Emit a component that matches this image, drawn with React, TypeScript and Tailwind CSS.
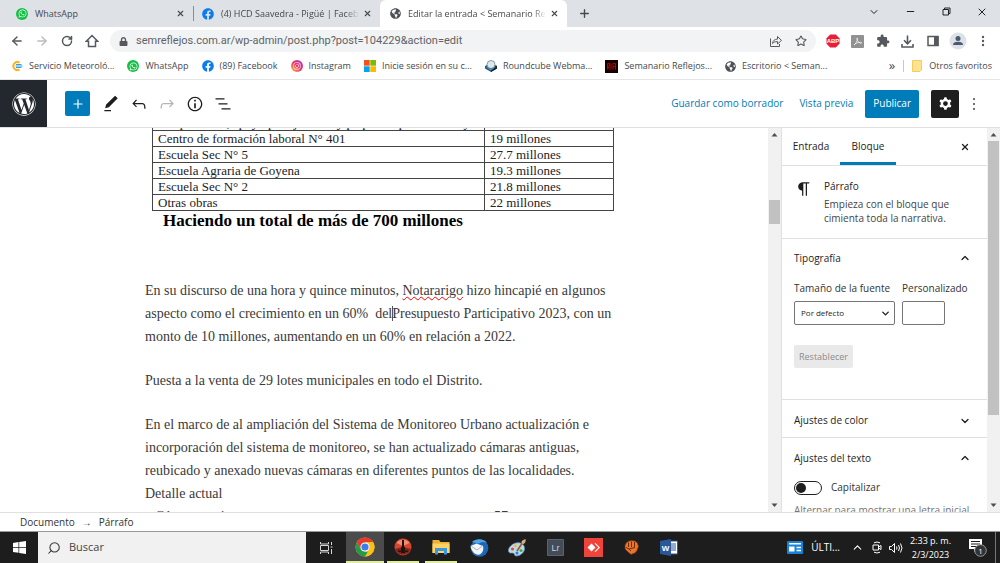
import type { ReactNode } from "react";
import {
  FaFacebook,
  FaGlobeAmericas,
  FaInstagram,
  FaLock,
  FaWhatsapp,
  FaWordpress,
} from "react-icons/fa";
import { MdExtension } from "react-icons/md";
import {
  ArrowLeft,
  ArrowRight,
  ChevronDown,
  ChevronUp,
  Minus,
  Plus,
  RotateCw,
  Search,
  Star,
  X,
} from "lucide-react";

const WhatsAppIcon = () => (
  <span className="flex h-3 w-3 shrink-0 items-center justify-center rounded-full bg-[#12c143] text-white">
    <FaWhatsapp size={9} />
  </span>
);

const FacebookIcon = () => <FaFacebook size={12} className="shrink-0 text-[#0a7cf0]" />;

const GlobeIcon = () => <FaGlobeAmericas size={11} className="shrink-0 text-[#4d5156]" />;

const ServicioIcon = () => (
  <svg width="12" height="12" viewBox="0 0 12 12" className="shrink-0">
    <path d="M8.500 2.600A4 4 0 1 0 8.500 9.400" fill="none" stroke="#fbb321" strokeWidth="2" />
    <path d="M5 4.500h5.500M4.500 6h7M5 7.500h5.500" stroke="#3d9be0" strokeWidth="1.200" />
  </svg>
);

const InstagramIcon = () => (
  <span className="flex h-3 w-3 shrink-0 items-center justify-center rounded-full bg-linear-to-tr from-[#fdb52b] via-[#f0255c] to-[#a020d8] text-white">
    <FaInstagram size={8} />
  </span>
);

const MicrosoftIcon = () => (
  <svg width="12" height="12" viewBox="0 0 12 12" className="shrink-0">
    <path fill="#f25022" d="M0 0h5.700v5.700H0z" />
    <path fill="#7fba00" d="M6.300 0H12v5.700H6.300z" />
    <path fill="#00a4ef" d="M0 6.300h5.700V12H0z" />
    <path fill="#ffb900" d="M6.300 6.300H12V12H6.300z" />
  </svg>
);

const RoundcubeIcon = () => (
  <svg width="12" height="12" viewBox="0 0 12 12" className="shrink-0">
    <path d="M0 6l6-3 6 3v2.500L6 12 0 8.500z" fill="#2b5f86" />
    <path d="M6 8.500l6-3v3L6 12z" fill="#16202a" />
    <circle cx="6" cy="4.500" r="4" fill="#dfe7ec" stroke="#66747e" strokeWidth=".7" />
    <path d="M0 6l6 3 6-3-6 4.500z" fill="#4d94c4" />
  </svg>
);

const SemanarioIcon = () => (
  <svg width="13" height="13" viewBox="0 0 13 13" className="shrink-0">
    <path d="M0 0h13v13H0z" fill="#150000" />
    <path d="M2.500 9.500v-6h2v2.500h-2l2 3.500M6 3.500v6M8 9.500v-6h2.500v6M8 6.500h2.500" stroke="#b80000" fill="none" />
  </svg>
);

const bookmarks = [
  { icon: <ServicioIcon />, text: "Servicio Meteoroló..." },
  { icon: <WhatsAppIcon />, text: "WhatsApp" },
  { icon: <FacebookIcon />, text: "(89) Facebook" },
  { icon: <InstagramIcon />, text: "Instagram" },
  { icon: <MicrosoftIcon />, text: "Inicie sesión en su c..." },
  { icon: <RoundcubeIcon />, text: "Roundcube Webma..." },
  { icon: <SemanarioIcon />, text: "Semanario Reflejos..." },
  { icon: <GlobeIcon />, text: "Escritorio < Seman..." },
];

const rows = [
  ["Cooperativas, apoyo para jóvenes y pequeños productores y", ""],
  ["Centro de formación laboral N° 401", "19 millones"],
  ["Escuela Sec N° 5", "27.7 millones"],
  ["Escuela Agraria de Goyena", "19.3 millones"],
  ["Escuela Sec N° 2", "21.8 millones"],
  ["Otras obras", "22 millones"],
];

function IconButton({ label, className = "", children }: { label: string; className?: string; children: ReactNode }) {
  return (
    <button aria-label={label} className={"flex shrink-0 items-center justify-center " + className}>
      {children}
    </button>
  );
}

function TabBar() {
  return (
    <div className="flex h-[27px] shrink-0 bg-[#dee1e6] text-[9px] text-[#45494d]">
      <div className="flex w-[193px] items-center pr-2 pl-4">
        <WhatsAppIcon />
        <span className="ml-[7px] flex-1">WhatsApp</span>
        <IconButton label="Cerrar WhatsApp">
          <X size={9} strokeWidth={3} />
        </IconButton>
      </div>
      <div className="my-[6px] w-px bg-[#8a8d91]" />
      <div className="flex w-[186px] items-center pr-2 pl-2">
        <FacebookIcon />
        <span className="ml-[7px] flex-1 overflow-hidden mask-r-from-90% whitespace-nowrap">
          (4) HCD Saavedra - Pigüé | Facebook
        </span>
        <IconButton label="Cerrar Facebook" className="ml-1">
          <X size={9} strokeWidth={3} />
        </IconButton>
      </div>
      <div className="flex w-[187px] items-center rounded-t-md bg-white pr-2 pl-[10px]">
        <GlobeIcon />
        <span className="ml-[7px] flex-1 overflow-hidden mask-r-from-90% whitespace-nowrap">
          Editar la entrada &lt; Semanario Reflejos
        </span>
        <IconButton label="Cerrar entrada" className="ml-1">
          <X size={9} strokeWidth={3} />
        </IconButton>
      </div>
      <IconButton label="Nueva pestaña" className="w-[34px]">
        <Plus size={13} strokeWidth={2.5} />
      </IconButton>
      <div className="ml-auto flex pb-1 text-[#222]">
        <IconButton label="Buscar pestañas" className="w-9">
          <ChevronDown size={12} strokeWidth={2} />
        </IconButton>
        <IconButton label="Minimizar" className="w-9">
          <Minus size={11} strokeWidth={2.5} />
        </IconButton>
        <IconButton label="Restaurar" className="w-9">
          <svg width="9" height="9" viewBox="0 0 9 9" fill="none" stroke="currentColor">
            <path d="M1 2.500h5.500V8H1zM2.500 2.500V1H8v5.500H6.500" />
          </svg>
        </IconButton>
        <IconButton label="Cerrar" className="w-9">
          <X size={12} strokeWidth={2} />
        </IconButton>
      </div>
    </div>
  );
}

function AddressBar() {
  return (
    <div className="flex h-7 shrink-0 items-center bg-white pr-[5px] pl-1 text-[#55595e]">
      <IconButton label="Atrás" className="w-[25px]">
        <ArrowLeft size={14} strokeWidth={2.5} />
      </IconButton>
      <IconButton label="Adelante" className="w-[25px] text-[#b9bcc0]">
        <ArrowRight size={14} strokeWidth={2.5} />
      </IconButton>
      <IconButton label="Recargar" className="w-[25px]">
        <RotateCw size={12} strokeWidth={3} />
      </IconButton>
      <IconButton label="Inicio" className="w-[25px]">
        <svg width="14" height="14" viewBox="0 0 14 14" fill="none" stroke="currentColor" strokeWidth="1.500">
          <path d="M1.300 7.200L7 1.500l5.700 5.700H10.500v5.300h-7V7.200z" />
        </svg>
      </IconButton>
      <div className="ml-[6px] flex h-[22px] flex-1 items-center rounded-full bg-[#f1f3f4] pr-[3px] pl-[9px]">
        <FaLock size={9} />
        <input
          aria-label="Dirección"
          defaultValue="semreflejos.com.ar/wp-admin/post.php?post=104229&action=edit"
          className="ml-2 min-w-0 flex-1 bg-transparent font-[Roboto,sans-serif] text-[11px] text-[#5f6368] outline-none"
        />
        <IconButton label="Compartir" className="w-[25px]">
          <svg width="12" height="12" viewBox="0 0 12 12" fill="none" stroke="currentColor">
            <path d="M.500 3.500v8h9V9" />
            <path d="M2.500 8.500c.4-3 2.200-4.300 5-4.400V1.500l4 3.900-4 3.600V6.600c-2.200 0-3.800.5-5 1.900z" />
          </svg>
        </IconButton>
        <IconButton label="Marcador" className="w-[25px]">
          <Star size={12} strokeWidth={2.2} />
        </IconButton>
      </div>
      <IconButton label="Adblock Plus" className="ml-1 w-[25px]">
        <svg width="14" height="14" viewBox="0 0 14 14">
          <path d="M4.200.500h5.600l3.700 3.700v5.600l-3.700 3.700H4.200L.500 9.800V4.200z" fill="#ec1c3c" />
          <text x="7" y="9" textAnchor="middle" fontSize="6" fontWeight="700" fill="#fff" fontFamily="Liberation Sans">
            ABP
          </text>
        </svg>
      </IconButton>
      <IconButton label="Acrobat" className="w-[25px]">
        <svg width="13" height="13" viewBox="0 0 13 13">
          <rect width="13" height="13" rx="1" fill="#919191" />
          <path
            d="M3 10c1.500-.8 3.500-4 3.500-6.500 0-1-.9-.7-.7.2C6.200 6 8 8 10 8.300c1 0 .8-1-.5-1C7 7.200 4 8.500 3 10z"
            fill="none"
            stroke="#f2f2f2"
            strokeWidth=".8"
          />
        </svg>
      </IconButton>
      <IconButton label="Extensiones" className="w-[25px]">
        <MdExtension size={14} />
      </IconButton>
      <IconButton label="Descargas" className="w-[25px]">
        <svg width="13" height="13" viewBox="0 0 13 13" fill="none" stroke="currentColor" strokeWidth="1.600">
          <path d="M6.500.500v8M3 5.300l3.500 3.500L10 5.300M1 9v3h11V9" />
        </svg>
      </IconButton>
      <IconButton label="Panel lateral" className="w-[25px]">
        <svg width="12" height="12" viewBox="0 0 12 12">
          <path d="M1 1.500h10v9H1z" fill="none" stroke="currentColor" strokeWidth="1.500" />
          <path d="M7 1h4.500v10H7z" fill="currentColor" />
        </svg>
      </IconButton>
      <IconButton label="Perfil" className="w-[25px]">
        <svg width="18" height="18" viewBox="0 0 18 18">
          <circle cx="9" cy="9" r="8.500" fill="#dee1e6" />
          <circle cx="9" cy="6.500" r="2.500" fill="#4a5a70" />
          <path d="M4 13c0-2.200 2-3.200 5-3.200s5 1 5 3.200z" fill="#4a5a70" />
        </svg>
      </IconButton>
      <IconButton label="Menú" className="w-[25px]">
        <svg width="4" height="12" viewBox="0 0 4 12" fill="currentColor">
          <circle cx="2" cy="2" r="1.200" />
          <circle cx="2" cy="6" r="1.200" />
          <circle cx="2" cy="10" r="1.200" />
        </svg>
      </IconButton>
    </div>
  );
}

function BookmarksBar() {
  return (
    <div className="flex h-[25px] shrink-0 items-center border-b border-[#e4e5e7] bg-white pr-2 pb-[2px] pl-[11px] text-[9px] whitespace-nowrap text-[#45494d]">
      <nav className="flex gap-[13px]">
        {bookmarks.map((bookmark) => (
          <a key={bookmark.text} href="#" className="flex items-center gap-[6px]">
            {bookmark.icon}
            {bookmark.text}
          </a>
        ))}
      </nav>
      <button className="ml-auto pb-[2px] text-[13px] leading-3">»</button>
      <div className="mx-2 h-3 w-px bg-[#c6c8cb]" />
      <a href="#" className="flex items-center gap-[7px]">
        <svg width="10" height="12" viewBox="0 0 10 12">
          <path d="M.500.500h9v9.500l-1.500 1.500H.500z" fill="#ffe38c" stroke="#f3cd63" />
        </svg>
        Otros favoritos
      </a>
    </div>
  );
}

function EditorHeader() {
  return (
    <header className="flex h-12 shrink-0 items-center border-b border-[#e0e0e0] bg-white text-[10px] text-[#007cba]">
      <a href="#" aria-label="WordPress" className="flex h-full w-[47px] items-center justify-center bg-[#23282e] text-white">
        <FaWordpress size={24} />
      </a>
      <IconButton label="Añadir bloque" className="ml-[18px] h-[25px] w-[25px] rounded-xs bg-[#007cba] text-white">
        <Plus size={14} strokeWidth={2} />
      </IconButton>
      <div className="ml-[7px] flex text-[#1e1e1e]">
        <IconButton label="Herramientas" className="w-7">
          <svg width="20" height="20" viewBox="0 0 24 24" fill="currentColor">
            <path d="M20.100 5.100L16.900 2 6.200 12.700l-1.300 4.400 4.500-1.300L20.100 5.100zM4 20.800h8v-1.500H4v1.500z" />
          </svg>
        </IconButton>
        <IconButton label="Deshacer" className="w-7">
          <svg width="20" height="20" viewBox="0 0 24 24" fill="currentColor">
            <path d="M18.300 11.700c-.6-.6-1.400-.9-2.300-.9H6.700l2.900-3.300-1.100-1-4.500 5L8.500 16l1-1-2.700-2.700H16c.5 0 .9.2 1.300.5 1 1 1 3.400 1 4.500v.3h1.500v-.2c0-1.500 0-4.300-1.500-5.700z" />
          </svg>
        </IconButton>
        <IconButton label="Rehacer" className="w-7 text-[#b5b5b5]">
          <svg width="20" height="20" viewBox="0 0 24 24" fill="currentColor">
            <path d="M15.600 6.500l-1.100 1 2.900 3.300H8c-.9 0-1.700.3-2.300.9-1.400 1.500-1.400 4.200-1.400 5.600v.2h1.500v-.3c0-1.100 0-3.500 1-4.500.3-.3.700-.5 1.300-.5h9.200L14.500 15l1.100 1.100 4.600-4.600-4.600-5z" />
          </svg>
        </IconButton>
        <IconButton label="Detalles" className="w-7">
          <svg width="20" height="20" viewBox="0 0 24 24" fill="currentColor">
            <path d="M12 3.200c-4.800 0-8.800 3.900-8.800 8.800 0 4.800 3.900 8.800 8.800 8.800 4.800 0 8.800-3.900 8.800-8.800 0-4.800-4-8.800-8.800-8.800zm0 16c-4 0-7.200-3.300-7.200-7.200C4.800 8 8 4.800 12 4.800s7.200 3.300 7.200 7.200c0 4-3.200 7.200-7.200 7.200zM11 17h2v-6h-2v6zm0-8h2V7h-2v2z" />
          </svg>
        </IconButton>
        <IconButton label="Vista de lista" className="w-7">
          <svg width="20" height="20" viewBox="0 0 24 24" fill="currentColor">
            <path d="M13.800 5.200H3v1.500h10.800V5.200zm-3.600 12v1.500H21v-1.500H10.200zm7.200-6H6.600v1.500h10.800v-1.500z" />
          </svg>
        </IconButton>
      </div>
      <button className="ml-auto">Guardar como borrador</button>
      <button className="ml-4">Vista previa</button>
      <button className="ml-3 h-7 rounded-xs bg-[#007cba] px-2 text-white">Publicar</button>
      <IconButton label="Ajustes" className="ml-3 h-7 w-7 rounded-xs bg-[#1e1e1e] text-white">
        <svg width="19" height="19" viewBox="0 0 24 24" fill="currentColor">
          <path
            fillRule="evenodd"
            d="M10.289 4.836A1 1 0 0111.275 4h1.306a1 1 0 01.987.836l.244 1.466c.787.26 1.503.679 2.108 1.218l1.393-.522a1 1 0 011.216.437l.653 1.130a1 1 0 01-.23 1.273l-1.148.944a6.025 6.025 0 010 2.435l1.149.946a1 1 0 01.23 1.272l-.653 1.130a1 1 0 01-1.216.437l-1.394-.522c-.605.540-1.320.958-2.108 1.218l-.244 1.466a1 1 0 01-.987.836h-1.306a1 1 0 01-.986-.836l-.244-1.466a5.995 5.995 0 01-2.108-1.218l-1.394.522a1 1 0 01-1.217-.436l-.653-1.131a1 1 0 01.23-1.272l1.149-.946a6.026 6.026 0 010-2.435l-1.148-.944a1 1 0 01-.23-1.272l.653-1.131a1 1 0 011.217-.437l1.393.522a5.994 5.994 0 012.108-1.218l.244-1.466zM14.929 12a3 3 0 11-6 0 3 3 0 016 0z"
          />
        </svg>
      </IconButton>
      <IconButton label="Opciones" className="mr-3 w-[29px] text-[#1e1e1e]">
        <svg width="20" height="20" viewBox="0 0 24 24" fill="currentColor">
          <path d="M13 19h-2v-2h2v2zm0-6h-2v-2h2v2zm0-6h-2V5h2v2z" />
        </svg>
      </IconButton>
    </header>
  );
}

function Scrollbar({ gap, thumb }: { gap: string; thumb: string }) {
  return (
    <div className="flex w-[13px] shrink-0 flex-col items-center bg-[#f1f1f1] text-[#505050]">
      <svg width="13" height="13" viewBox="0 0 13 13" fill="currentColor">
        <path d="M3.500 8.500h6l-3-3.500z" />
      </svg>
      <div className={gap} />
      <div className={"w-[11px] bg-[#c1c1c1] " + thumb} />
      <svg width="13" height="13" viewBox="0 0 13 13" fill="currentColor" className="mt-auto">
        <path d="M3.500 4.500h6l-3 3.500z" />
      </svg>
    </div>
  );
}

function Content() {
  return (
    <main className="flex-1 overflow-hidden bg-white">
      <div className="mx-auto w-full max-w-[478px] font-['Liberation_Serif',serif] text-sm leading-[23px] text-[#3a3a3a]">
        <table className="-mt-[14px] ml-[7px] w-[462px] border-collapse text-[13px] leading-[15px] text-[#222]">
          <tbody>
            {rows.map(([name, amount]) => (
              <tr key={name}>
                <td className="h-4 w-[332px] border border-[#444] px-[5px] whitespace-nowrap">{name}</td>
                <td className="h-4 border border-[#444] px-[5px] whitespace-nowrap">{amount}</td>
              </tr>
            ))}
          </tbody>
        </table>
        <h3 className="ml-[18px] text-[17px] leading-5 font-bold text-black">
          Haciendo un total de más de 700 millones
        </h3>
        <p className="mt-12">
          En su discurso de una hora y quince minutos,{" "}
          <span className="underline decoration-[#f00] decoration-wavy decoration-1">Notararigo</span> hizo hincapié en
          algunos
          <br />
          aspecto como el crecimiento en un 60%&nbsp; del
          <span className="-mr-px border-l border-[#555]" />
          Presupuesto Participativo 2023, con un
          <br />
          monto de 10 millones, aumentando en un 60% en relación a 2022.
        </p>
        <p className="mt-[21px]">Puesta a la venta de 29 lotes municipales en todo el Distrito.</p>
        <p className="mt-[21px]">
          En el marco de al ampliación del Sistema de Monitoreo Urbano actualización e
          <br />
          incorporación del sistema de monitoreo, se han actualizado cámaras antiguas,
          <br />
          reubicado y anexado nuevas cámaras en diferentes puntos de las localidades.
          <br />
          Detalle actual
        </p>
        <div className="flex pl-[10px]">
          <span className="w-[339px]">Cámaras existentes</span>
          <span>57</span>
        </div>
      </div>
    </main>
  );
}

function Sidebar() {
  return (
    <aside className="flex min-w-0 flex-1 flex-col overflow-hidden bg-white text-[10px] text-[#1e1e1e]">
      <div className="flex h-[38px] shrink-0 items-center border-b border-[#e0e0e0] pr-[17px] font-medium">
        <button className="w-[58px]">Entrada</button>
        <button className="h-full w-14 border-b-3 border-[#007cba] pt-[3px]">Bloque</button>
        <IconButton label="Cerrar ajustes" className="ml-auto">
          <X size={10} strokeWidth={3} />
        </IconButton>
      </div>
      <section className="flex h-[73px] shrink-0 border-b border-[#e0e0e0] pt-[13px] pl-3 leading-[14px]">
        <svg width="20" height="20" viewBox="0 0 24 24" fill="currentColor" className="mr-[10px]">
          <path d="M18.300 4H9.900v-.1l-.9.200c-2.300.4-4 2.400-4 4.800s1.700 4.400 4 4.800l.7.100V20h1.500V5.500h2.900V20h1.500V5.500h2.700V4z" />
        </svg>
        <div>
          <h2 className="pb-1 font-medium">Párrafo</h2>
          <p className="text-[#444]">
            Empieza con el bloque que
            <br />
            cimienta toda la narrativa.
          </p>
        </div>
      </section>
      <section className="h-[161px] shrink-0 border-b border-[#e0e0e0] pr-4 pl-3">
        <button className="flex h-[38px] w-full items-center justify-between font-medium">
          Tipografía
          <ChevronUp size={12} strokeWidth={2.5} />
        </button>
        <div className="flex gap-[7px] pt-1">
          <div className="w-[101px]">
            <label htmlFor="size" className="block leading-[15px] whitespace-nowrap text-[#333]">
              Tamaño de la fuente
            </label>
            <div className="relative mt-[5px]">
              <select
                id="size"
                className="h-6 w-full appearance-none rounded-xs border border-[#757575] bg-white pl-[6px] text-[8px]"
              >
                <option>Por defecto</option>
              </select>
              <ChevronDown size={11} strokeWidth={3} className="pointer-events-none absolute top-[7px] right-1" />
            </div>
          </div>
          <div>
            <label htmlFor="custom" className="block leading-[15px] text-[#333]">
              Personalizado
            </label>
            <input id="custom" className="mt-[5px] h-6 w-[43px] rounded-xs border border-[#757575] px-1" />
          </div>
        </div>
        <button disabled className="mt-5 h-[23px] rounded-xs bg-[#e9e9e9] px-[5px] text-[9px] text-[#8c8c8c]">
          Restablecer
        </button>
      </section>
      <section className="shrink-0 border-b border-[#e0e0e0] pr-4 pl-3">
        <button className="flex h-[37px] w-full items-center justify-between pt-1 font-medium">
          Ajustes de color
          <ChevronDown size={12} strokeWidth={2.5} />
        </button>
      </section>
      <section className="pr-4 pl-3">
        <button className="flex h-10 w-full items-center justify-between font-medium">
          Ajustes del texto
          <ChevronUp size={12} strokeWidth={2.5} />
        </button>
        <label className="mt-[2px] flex items-center gap-[9px] text-[#333]">
          <input
            type="checkbox"
            className="h-[14px] w-7 appearance-none rounded-full border border-[#1e1e1e] bg-white before:m-px before:block before:h-[10px] before:w-[10px] before:rounded-full before:bg-[#1e1e1e]"
          />
          Capitalizar
        </label>
        <p className="mt-2 whitespace-nowrap text-[#757575]">Alternar para mostrar una letra inicial</p>
      </section>
    </aside>
  );
}

const ChromeIcon = () => (
  <svg width="20" height="20" viewBox="0 0 20 20">
    <circle cx="10" cy="10" r="9.500" fill="#fbc116" />
    <path d="M1.770 5.250A9.500 9.500 0 0 1 18.230 5.250H10L5.890 12.380z" fill="#e33b2e" />
    <path d="M1.770 5.250L5.890 12.380 10 14.750h4.100L10 19.500A9.500 9.500 0 0 1 1.770 5.250z" fill="#269a4b" />
    <path d="M14.110 12.380L10 19.500a9.500 9.500 0 0 0 8.230-14.250H10z" fill="#fbc116" />
    <circle cx="10" cy="10" r="4.600" fill="#fff" />
    <circle cx="10" cy="10" r="3.600" fill="#3b7ded" />
  </svg>
);

const taskbarApps = [
  {
    name: "Google Chrome",
    className: "w-[38px] border-b-2 border-[#e0ee9c] bg-[#4b4b4b]",
    icon: <ChromeIcon />,
  },
  {
    name: "Nitro",
    className: "mx-[3px] w-8 border-b-2 border-[#e0ee9c]",
    icon: (
      <svg width="18" height="18" viewBox="0 0 18 18">
        <circle cx="9" cy="9" r="8.500" fill="#d8452e" />
        <path d="M1 11a8.500 8.500 0 0 0 16 0L9 9z" fill="#7d2318" />
        <path d="M2.500 5a8 8 0 0 1 13 0L9 8z" fill="#f28a6c" />
        <path d="M8 2h2v6l1 1.500V15H7V9.500L8 8z" fill="#1b1311" />
        <path d="M4 12.500h10V14H4z" fill="#2a1512" />
      </svg>
    ),
  },
  {
    name: "Explorador de archivos",
    className: "mx-[3px] w-8 border-b-2 border-[#e0ee9c]",
    icon: (
      <svg width="18" height="16" viewBox="0 0 18 16">
        <path d="M.500 1h6.500l1.500 2h9v11H.500z" fill="#eeb02f" />
        <path d="M.500 4.500h17V14H.500z" fill="#fcd364" />
        <path d="M3 15.500V9h12v6.500h-3V12H6v3.500z" fill="#3b97dd" />
      </svg>
    ),
  },
  {
    name: "Thunderbird",
    className: "w-[38px]",
    icon: (
      <svg width="20" height="20" viewBox="0 0 20 20">
        <circle cx="10.500" cy="10" r="8.800" fill="#1d67b8" />
        <path d="M3 4c4-4 12-3.500 15 1-3-1.500-6-1-8 .5z" fill="#4fa7e6" />
        <path d="M1.500 8l6-2.500L14 8c1 3.500-.5 7.500-3.500 8.500C6.500 17.500 2.500 14 1.500 8z" fill="#f2f4f6" />
        <path d="M2 8l6 4 5.500-4" fill="none" stroke="#a9b5c1" />
      </svg>
    ),
  },
  {
    name: "Paint",
    className: "w-[38px]",
    icon: (
      <svg width="20" height="20" viewBox="0 0 20 20">
        <path d="M9 5c5-1 8.500 1.500 8.500 5.500S13 18 9 18c-2 0-1-3-3-3s-4.500.500-4.500-2.500S5 5.800 9 5z" fill="#b9d9ee" stroke="#6f9fc1" strokeWidth=".7" />
        <circle cx="5.500" cy="11" r="1.500" fill="#e64632" />
        <circle cx="8.500" cy="7.800" r="1.400" fill="#f5b91e" />
        <circle cx="10" cy="15" r="1.500" fill="#2f7dd2" />
        <circle cx="14" cy="12.500" r="1.500" fill="#4aa83e" />
        <path d="M10 13l6-9" stroke="#9b5c28" strokeWidth="1.600" />
        <path d="M14.500 5c0-3 2-3 4-4 .5 2 0 4.500-2.500 5.200z" fill="#d4ae7c" />
      </svg>
    ),
  },
  {
    name: "Lightroom",
    className: "w-[38px]",
    icon: (
      <svg width="17" height="17" viewBox="0 0 17 17">
        <path d="M.500.500h16v16H.500z" fill="#434c57" stroke="#59626e" />
        <text x="8.500" y="12" textAnchor="middle" fontSize="9" fill="#c5d1dc" fontFamily="Liberation Sans">
          Lr
        </text>
      </svg>
    ),
  },
  {
    name: "AnyDesk",
    className: "w-[38px]",
    icon: (
      <svg width="19" height="19" viewBox="0 0 19 19">
        <path d="M0 0h19v19H0z" fill="#f0433a" />
        <path d="M7.500 5.500l4 4-4 4-4-4z" fill="#fff" />
        <path d="M10.500 5.500l1-.5 4.500 4.500-4.500 4.500-1-.5 4-4z" fill="#fff" />
      </svg>
    ),
  },
  {
    name: "Puño",
    className: "w-[38px]",
    icon: (
      <svg width="17" height="17" viewBox="0 0 17 17">
        <path d="M2 6l1.500-2.500L6 2l2.500-.5L12 2l2.500 2 1 3.500-1.500 4-2 2.500-4 1.500L5 13 2 10z" fill="#e8752b" stroke="#6d2d0c" strokeWidth=".7" />
        <path d="M5.500 3.500V8M8.500 2.500V8M11.500 3v5M3 8.500l3 1.500 6-1.500M6 10l2 2" stroke="#6d2d0c" fill="none" />
      </svg>
    ),
  },
  {
    name: "Word",
    className: "w-[38px]",
    icon: (
      <svg width="18" height="17" viewBox="0 0 18 17">
        <path d="M9 2h8.500v13H9z" fill="#fff" stroke="#2b579a" />
        <path d="M11 5h5M11 7h5M11 9h5M11 11h5" stroke="#2b579a" />
        <path d="M0 2l11-2v17L0 15z" fill="#2b579a" />
        <text x="5.500" y="11.500" textAnchor="middle" fontSize="8" fontWeight="700" fill="#fff" fontFamily="Liberation Sans">
          W
        </text>
      </svg>
    ),
  },
];

function Taskbar() {
  return (
    <div className="flex h-8 shrink-0 items-stretch border-t border-[#9a9a9a] bg-[#1d1d1d] text-white">
      <IconButton label="Inicio de Windows" className="w-[38px]">
        <svg width="13" height="13" viewBox="0 0 13 13" fill="currentColor">
          <path d="M0 1.900l5.500-.8v5H0zM6.200 1L13 0v6.100H6.200zM0 6.800h5.500v5L0 11zM6.200 6.800H13V13l-6.800-1z" />
        </svg>
      </IconButton>
      <label className="flex w-[268px] items-center gap-2 bg-[#f1f1f1] pl-[9px] text-[#333]">
        <Search size={14} strokeWidth={1.8} className="-scale-x-100" />
        <input
          placeholder="Buscar"
          className="min-w-0 flex-1 bg-transparent text-[11px] outline-none placeholder:text-[#444]"
        />
      </label>
      <IconButton label="Vista de tareas" className="w-10">
        <svg width="13" height="12" viewBox="0 0 13 12" fill="none" stroke="#d6d6d6">
          <path d="M.500 0v2h8V0M.500 12v-2h8v2M.500 3.500h8v5h-8zM11.500 0v3M11.500 7v5M10.500 5h2" />
        </svg>
      </IconButton>
      {taskbarApps.map((app) => (
        <IconButton key={app.name} label={app.name} className={app.className}>
          {app.icon}
        </IconButton>
      ))}
      <button className="ml-auto flex items-center gap-2 text-[10px]">
        <svg width="16" height="13" viewBox="0 0 16 13">
          <rect width="16" height="13" rx="1" fill="#1683d8" />
          <path d="M2 2.800h12M9.500 6.500H14M9.500 9.500H14" stroke="#fff" strokeWidth="1.500" />
          <path d="M2 5.500h5.500v5H2z" fill="#fff" />
        </svg>
        ÚLTI...
      </button>
      <IconButton label="Mostrar iconos ocultos" className="ml-2 w-[19px]">
        <ChevronUp size={13} strokeWidth={2} />
      </IconButton>
      <IconButton label="Reunirse ahora" className="w-[19px]">
        <svg width="10" height="13" viewBox="0 0 10 13" fill="none" stroke="currentColor">
          <path d="M1 4h5.500v5H1zM6.500 6l2.500-1.500v4L6.500 7M2 1.800q3-1.600 6 0M2 11.200q3 1.600 6 0" />
        </svg>
      </IconButton>
      <IconButton label="Volumen" className="w-[19px]">
        <svg width="14" height="12" viewBox="0 0 14 12" fill="none" stroke="currentColor">
          <path d="M.500 4.500h2L5.500 1.500v9L2.500 7.500h-2zM7.500 4.500q1 1.500 0 3M9.500 3q2 3 0 6M11.500 1.500q3 4.500 0 9" />
        </svg>
      </IconButton>
      <div className="flex w-[51px] flex-col justify-center text-center text-[9px] leading-[14px]">
        <span>2:33 p. m.</span>
        <span>2/3/2023</span>
      </div>
      <IconButton label="Notificaciones" className="mr-1 w-10 border-r border-[#777] pl-1">
        <svg width="19" height="19" viewBox="0 0 19 19">
          <path d="M1 1h13v10H9l-3 3v-3H1z" fill="#fff" />
          <path d="M3 3.500h9M3 6h9M3 8.500h6" stroke="#1d1d1d" />
          <circle cx="12.500" cy="12.500" r="5.800" fill="#333" stroke="#999" />
          <text x="12.500" y="15.500" textAnchor="middle" fontSize="8" fill="#fff" fontFamily="Open Sans">
            1
          </text>
        </svg>
      </IconButton>
    </div>
  );
}

export default function App() {
  return (
    <div className="flex h-screen flex-col overflow-hidden bg-white font-['Open_Sans',sans-serif]">
      <TabBar />
      <AddressBar />
      <BookmarksBar />
      <EditorHeader />
      <div className="flex min-h-0 flex-1">
        <Content />
        <Scrollbar gap="h-[59px] shrink-0" thumb="h-6 shrink-0" />
        <div className="flex w-[219px] shrink-0 border-l border-[#e0e0e0]">
          <Sidebar />
          <Scrollbar gap="h-0" thumb="h-[274px] shrink-0" />
        </div>
      </div>
      <footer className="flex h-[19px] shrink-0 items-center gap-[7px] border-t border-[#e0e0e0] bg-white pl-5 text-[10px] text-[#333]">
        <a href="#">Documento</a>
        <span>→</span>
        <span>Párrafo</span>
      </footer>
      <Taskbar />
    </div>
  );
}
